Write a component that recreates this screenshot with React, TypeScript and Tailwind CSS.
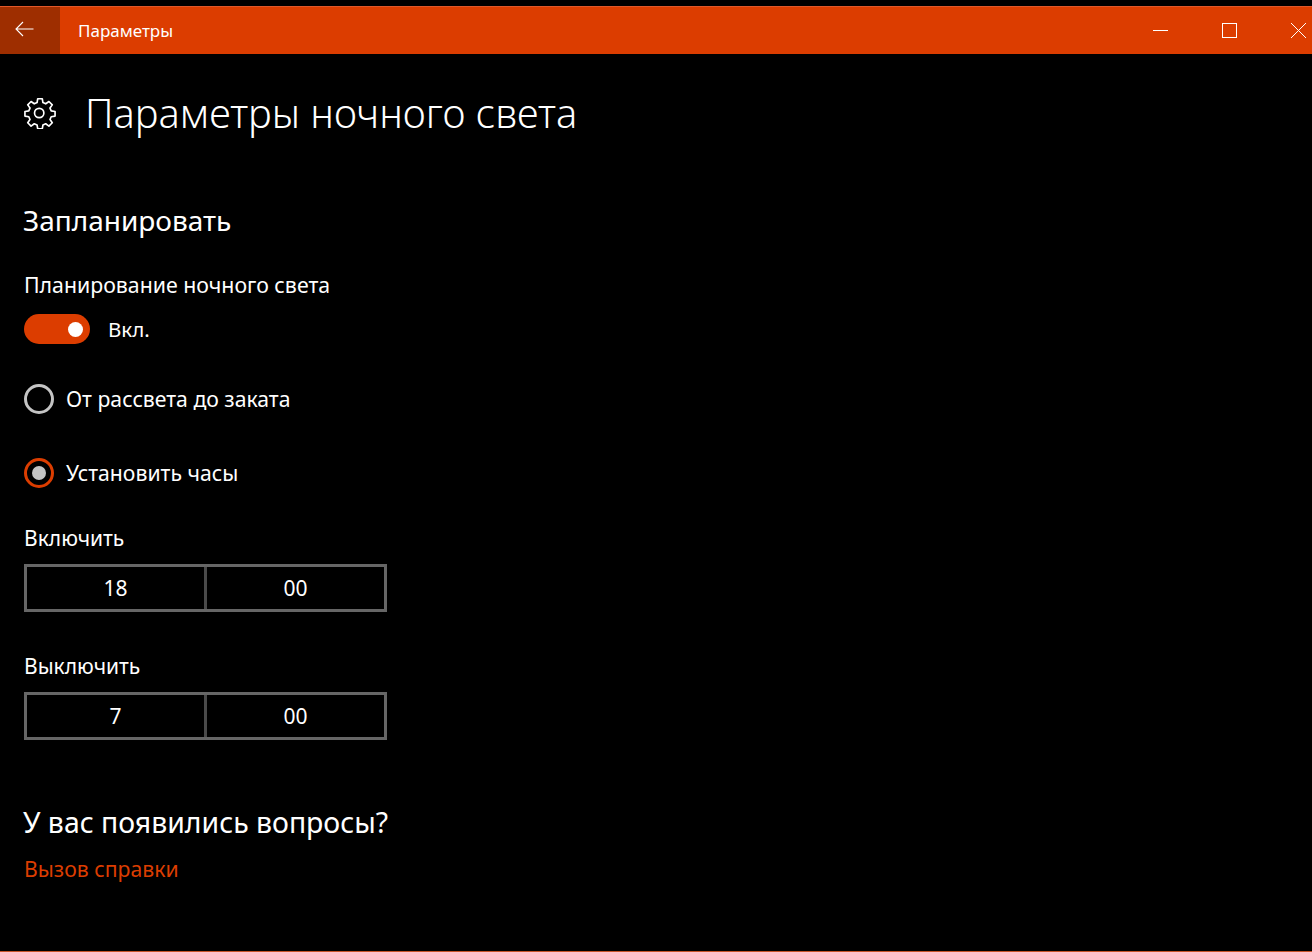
import React from "react";

const font = { fontFamily: '"Noto Sans", "Open Sans", sans-serif' };

function TimeField({ left, right }: { left: string; right: string }) {
  return (
    <div className="flex h-[48px] w-[363px] border-[3px] border-[#666666] text-[21px] text-white">
      <div className="flex flex-1 items-center justify-center border-r-[3px] border-[#4a4a4a] pt-[2px]">{left}</div>
      <div className="flex flex-1 items-center justify-center pt-[2px]">{right}</div>
    </div>
  );
}

function Gear() {
  return (
    <svg width="32" height="32" viewBox="0 0 24 24" fill="none" stroke="white" strokeWidth="1.25" strokeLinejoin="round" strokeLinecap="round">
      <path d="M10.3 1.6h3.4l.5 2.9 2.1.9 2.4-1.7 2.5 2.5-1.7 2.4.9 2.1 2.9.5v3.4l-2.9.5-.9 2.1 1.7 2.4-2.5 2.5-2.4-1.7-2.1.9-.5 2.9h-3.4l-.5-2.9-2.1-.9-2.4 1.7-2.5-2.5 1.7-2.4-.9-2.1-2.9-.5v-3.4l2.9-.5.9-2.1-1.7-2.4 2.5-2.5 2.4 1.7 2.1-.9z" transform="translate(0 -.3)" />
      <circle cx="11.4" cy="12" r="3.5" />
    </svg>
  );
}

export default function App() {
  return (
    <div className="flex h-[952px] w-[1312px] flex-col overflow-hidden bg-black text-white" style={font}>
      <div className="mt-[6px] flex h-[48px] border-t border-[#e0582a] bg-[#dc3d00]">
        <div className="flex w-[60px] items-center justify-start bg-[#9e2e00] pl-[15px]">
          <svg className="-mt-[3px]" width="19" height="16" viewBox="0 0 19 16" fill="none" stroke="white" strokeWidth="1.1">
            <path d="M18.5 8H1M8 1L1 8l7 7" />
          </svg>
        </div>
        <div className="flex flex-1 items-center pl-[18px] text-[17px]">Параметры</div>
        <div className="flex items-center pr-[6px]">
          <div className="mr-[54px] h-[1px] w-[15px] bg-white" />
          <div className="mr-[54px] h-[15px] w-[15px] border border-white" />
          <svg width="15" height="15" viewBox="0 0 15 15" stroke="white" strokeWidth="1">
            <path d="M0 0l15 15M15 0L0 15" />
          </svg>
        </div>
      </div>

      <main className="flex-1 pl-[24px]">
        <div className="mt-[32px] flex items-center">
          <Gear />
          <h1 className="ml-[29px] text-[39.9px] leading-[54px] font-light">Параметры ночного света</h1>
        </div>

        <h2 className="mt-[63px] -ml-px text-[28px] leading-[34px]">Запланировать</h2>

        <div className="mt-[34px] text-[21.3px] leading-[28px]">Планирование ночного света</div>
        <div className="mt-[15px] flex items-center">
          <div className="flex h-[30px] w-[66px] items-center justify-end rounded-full bg-[#dc3d00] pr-[7px]">
            <div className="h-[15px] w-[15px] rounded-full bg-white" />
          </div>
          <span className="ml-[18px] text-[20.5px] leading-[28px]">Вкл.</span>
        </div>

        <div className="mt-[40px] flex items-center">
          <div className="h-[30px] w-[30px] rounded-full border-[3px] border-[#c4c4c4]" />
          <span className="ml-[12px] text-[21.2px] leading-[28px]">От рассвета до заката</span>
        </div>

        <div className="mt-[44px] flex items-center">
          <div className="flex h-[30px] w-[30px] items-center justify-center rounded-full border-[3px] border-[#dc3d00]">
            <div className="h-[14px] w-[14px] rounded-full bg-[#c4c4c4]" />
          </div>
          <span className="ml-[12px] text-[21.2px] leading-[28px]">Установить часы</span>
        </div>

        <div className="mt-[36px] text-[21px] leading-[28px]">Включить</div>
        <div className="mt-[12px]">
          <TimeField left="18" right="00" />
        </div>

        <div className="mt-[40px] text-[21px] leading-[28px]">Выключить</div>
        <div className="mt-[12px]">
          <TimeField left="7" right="00" />
        </div>

        <h2 className="mt-[64px] -ml-px text-[28.4px] leading-[36px]">У вас появились вопросы?</h2>
        <div className="mt-[15px] text-[21.2px] leading-[28px] text-[#dc3d00]">Вызов справки</div>
      </main>

      <div className="h-px bg-[#c8532a]" />
    </div>
  );
}
